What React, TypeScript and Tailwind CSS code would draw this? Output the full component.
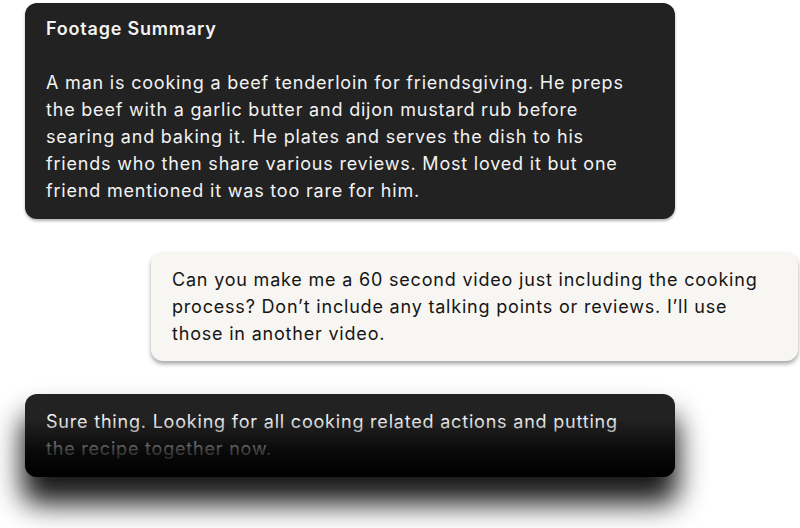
export default function App() {
  return (
    <main
      className="h-[528px] w-[800px] overflow-hidden bg-white flex flex-col pt-[3px] pl-[25px] text-[18px] leading-[27px] tracking-[0.8px]"
      style={{ fontFamily: "Inter, 'Noto Sans', sans-serif" }}
    >
      {/* Summary card */}
      <div className="w-[650px] rounded-[12px] bg-[#222222] px-[21px] pt-[12px] pb-[15px] text-[#f2f2f2] shadow-[0_2px_3px_rgba(0,0,0,0.3)]">
        <h2 className="font-semibold">Footage Summary</h2>
        <p className="mt-[27px] w-[590px]">
          A man is cooking a beef tenderloin for friendsgiving. He preps the beef with a garlic butter and dijon mustard
          rub before searing and baking it. He plates and serves the dish to his friends who then share various reviews.
          Most loved it but one friend mentioned it was too rare for him.
        </p>
      </div>

      {/* User message */}
      <div className="mt-[33px] ml-[126px] w-[647px] rounded-[12px] bg-[#f7f6f2] px-[21px] pt-[14px] pb-[14px] text-[#151515] shadow-[0_3px_4px_rgba(0,0,0,0.35)]">
        <p>
          Can you make me a 60 second video just including the cooking process? Don’t include any talking points or
          reviews. I’ll use those in another video.
        </p>
      </div>

      {/* Reply, fading out */}
      <div className="relative mt-[33px] w-[650px] overflow-hidden rounded-[12px] bg-[#222222] px-[21px] pt-[14px] pb-[15px] text-[#f2f2f2] shadow-[0_24px_28px_3px_rgba(0,0,0,0.9)]">
        <p className="w-[590px]">
          Sure thing. Looking for all cooking related actions and putting the recipe together now.
        </p>
        <div className="pointer-events-none absolute inset-0 bg-[linear-gradient(to_bottom,rgba(0,0,0,0)_30%,rgba(0,0,0,0.75)_70%,#000_100%)]" />
      </div>
    </main>
  );
}
